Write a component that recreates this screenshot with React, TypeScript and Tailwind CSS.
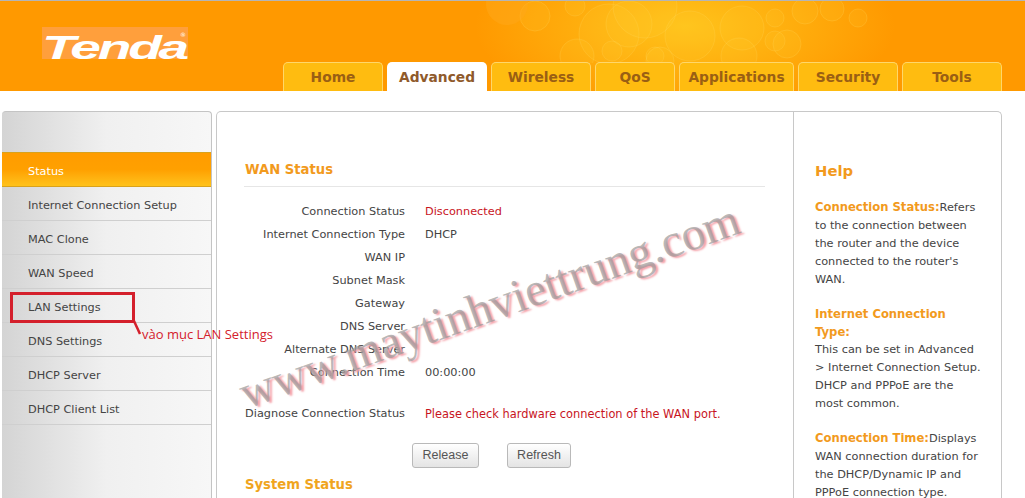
import React from 'react';

const tabs = [
  { name: 'Home', w: 'w-[100px]' },
  { name: 'Advanced', w: 'w-[100px]', active: true },
  { name: 'Wireless', w: 'w-[100px]' },
  { name: 'QoS', w: 'w-[80px]' },
  { name: 'Applications', w: 'w-[115px]' },
  { name: 'Security', w: 'w-[100px]' },
  { name: 'Tools', w: 'w-[100px]' },
];

const menu = [
  'Internet Connection Setup',
  'MAC Clone',
  'WAN Speed',
  'LAN Settings',
  'DNS Settings',
  'DHCP Server',
  'DHCP Client List',
];

const statusRows = [
  { label: 'Connection Status', value: 'Disconnected', red: true },
  { label: 'Internet Connection Type', value: 'DHCP' },
  { label: 'WAN IP', value: '' },
  { label: 'Subnet Mask', value: '' },
  { label: 'Gateway', value: '' },
  { label: 'DNS Server', value: '' },
  { label: 'Alternate DNS Server', value: '' },
  { label: 'Connection Time', value: '00:00:00' },
];

// bulles décoratives du bandeau
const bubbles = [
  [535, 15, 15], [575, 5, 10], [609, 33, 30], [629, 23, 23], [645, 5, 32], [690, 35, 25],
  [742, 27, 22], [775, 17, 9], [775, 40, 10], [787, 43, 14], [577, 55, 17], [612, 50, 10],
  [739, 55, 18], [805, 10, 13], [832, 8, 12], [858, 17, 9], [655, 55, 9], [660, 60, 14],
];

const App: React.FC = () => {
  return (
    <div className="relative h-[498px] w-[1025px] overflow-hidden bg-white font-['DejaVu_Sans',sans-serif] text-[11.3px] text-[#444]">
      {/* Bandeau */}
      <div className="relative flex h-[91px] items-end border-t border-[#b5b5b5] bg-[#ff9900] pl-[283px]">
        <svg className="absolute left-0 top-0" width="1025" height="90" viewBox="0 0 1025 90">
          <defs>
            <clipPath id="band"><rect width="1025" height="62" /></clipPath>
            <radialGradient id="glow" cx="0.5" cy="0.5" r="0.5">
              <stop offset="0" stopColor="#ffc81e" stopOpacity="0.9" />
              <stop offset="1" stopColor="#ffc81e" stopOpacity="0" />
            </radialGradient>
          </defs>
          <ellipse cx="685" cy="25" rx="210" ry="90" fill="url(#glow)" />
          <g clipPath="url(#band)">
            {bubbles.map(([cx, cy, r], i) => (
              <circle key={i} cx={cx} cy={cy} r={r} fill="#ffd23c" fillOpacity="0.12" stroke="#ffdc64" strokeOpacity="0.22" />
            ))}
          </g>
          <circle cx="507" cy="3" r="21" fill="#ffa81a" fillOpacity="0.5" />
        </svg>

        {/* Logo */}
        <div className="absolute left-[42px] top-[26px] flex h-[32px] w-[146px] items-end bg-[#ff9f3c]">
          <span className="origin-left translate-y-[5px] scale-x-[1.62] font-['Liberation_Sans',sans-serif] text-[34px] font-bold italic leading-none tracking-[-2px] text-white">Tenda</span>
          <span className="absolute left-[138px] top-[5px] text-[6px] leading-none text-white">®</span>
        </div>

        <div className="relative flex gap-1">
          {tabs.map((tab) => (
            <div
              key={tab.name}
              className={`${tab.w} flex h-[29px] items-center justify-center rounded-t-[5px] pt-[1px] text-[13.8px] font-bold ${
                tab.active
                  ? 'bg-white text-[#8f5a2b]'
                  : 'border-x border-t border-[#ffd76a] bg-[#ffbc10] text-[#9a5f14]'
              }`}
            >
              {tab.name}
            </div>
          ))}
        </div>
      </div>

      <div className="flex gap-1 pl-[2px] pt-[20px]">
        {/* Menu latéral */}
        <div className="flex h-[500px] w-[210px] flex-col rounded-t-[4px] border-r border-t border-[#c4c4c4] bg-gradient-to-r from-[#d4d4d4] via-[#f0f0f0] to-[#f7f7f7] pt-[40px]">
          <div className="flex h-[35px] items-center border-y border-[#d9a21c] bg-gradient-to-b from-[#ff9c00] via-[#ffa000] to-[#ffc21a] pl-[26px] pt-[5px] text-white">
            Status
          </div>
          {menu.map((item) => (
            <div key={item} className="flex h-[34px] items-center border-b border-[#cfcfcf] pl-[26px] pt-[6px] text-[#444]">
              {item}
            </div>
          ))}
        </div>

        {/* Contenu */}
        <div className="flex h-[500px] w-[786px] rounded-t-[5px] border-x border-t border-[#c8c8c8]">
          <div className="w-[576px] pl-[27px] pt-[48px]">
            <h2 className="w-[521px] border-b border-[#e6e6e6] pb-[6px] pl-[1px] text-[13.2px] font-bold leading-[20px] text-[#f29a1d]">WAN Status</h2>
            <div className="flex flex-col pt-[14px]">
              {statusRows.map((row) => (
                <div key={row.label} className="flex h-[23px] items-center">
                  <div className="w-[161px] whitespace-nowrap text-right">{row.label}</div>
                  <div className={`ml-[20px] ${row.red ? 'text-[#c8141e]' : ''}`}>{row.value}</div>
                </div>
              ))}
              <div className="mt-[18px] flex h-[23px] items-center">
                <div className="w-[161px] whitespace-nowrap text-right">Diagnose Connection Status</div>
                <div className="ml-[20px] whitespace-nowrap text-[11.4px] text-[#c8141e]">Please check hardware connection of the WAN port.</div>
              </div>
            </div>
            <div className="flex gap-7 pl-[168px] pt-[17px]">
              <button className="h-[25px] w-[67px] rounded-[3px] border border-[#b9b9b9] bg-gradient-to-b from-white to-[#e4e4e4] font-['Liberation_Sans',sans-serif] text-[12.5px] text-[#555]">Release</button>
              <button className="h-[25px] w-[64px] rounded-[3px] border border-[#b9b9b9] bg-gradient-to-b from-white to-[#e4e4e4] font-['Liberation_Sans',sans-serif] text-[12.5px] text-[#555]">Refresh</button>
            </div>
            <h2 className="pl-[1px] pt-[7px] text-[13.2px] font-bold leading-[20px] text-[#f0a51e]">System Status</h2>
          </div>

          {/* Aide */}
          <div className="w-[208px] border-l border-[#c8c8c8] pl-[21px] pr-[18px] pt-[48px] leading-[18px]">
            <h2 className="mb-[16px] text-[14.8px] font-bold leading-[22px] text-[#f29a1d]">Help</h2>
            <p className="mb-[16px]"><b className="text-[11.6px] text-[#f29a1d]">Connection Status:</b>Refers to the connection between the router and the device connected to the router's WAN.</p>
            <p className="mb-[16px]"><b className="block text-[11.6px] text-[#f29a1d]">Internet Connection Type:</b>This can be set in Advanced &gt; Internet Connection Setup. DHCP and PPPoE are the most common.</p>
            <p><b className="text-[11.6px] text-[#f29a1d]">Connection Time:</b>Displays WAN connection duration for the DHCP/Dynamic IP and PPPoE connection type.</p>
          </div>
        </div>
      </div>

      {/* Annotation rouge */}
      <div className="absolute left-[10px] top-[292px] h-[31px] w-[125px] border-[3px] border-[#d4202c]" />
      <svg className="absolute left-[132px] top-[320px]" width="12" height="18" viewBox="0 0 12 18">
        <path d="M2 1 L8 14" stroke="#d4202c" strokeWidth="2.5" fill="none" />
      </svg>
      <div className="absolute left-[142px] top-[325px] whitespace-nowrap font-['Open_Sans',sans-serif] text-[13px] leading-[18px] text-[#d4202c]">vào mục LAN Settings</div>

      {/* Filigrane */}
      <div className="pointer-events-none absolute left-[241px] top-[364px] origin-left -rotate-[19.6deg] whitespace-nowrap font-['Liberation_Serif',serif] text-[47px] leading-[60px] text-[#9a9a9a]/70 [text-shadow:2px_2px_2px_#f4a0a8]">
        www.maytinhviettrung.com
      </div>
    </div>
  );
};

export default App;
